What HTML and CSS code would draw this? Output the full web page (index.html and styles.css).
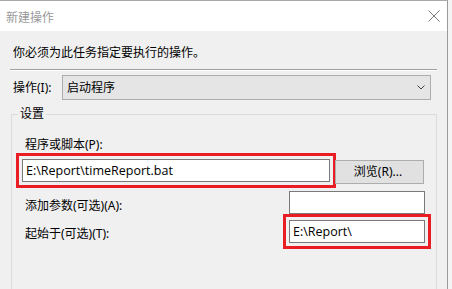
FILE: index.html
```html
<!DOCTYPE html>
<html lang="zh-CN">
<head>
<meta charset="utf-8">
<title>新建操作</title>
<link rel="stylesheet" href="styles.css">
</head>
<body>
<div class="window">
  <div class="titlebar">
    <span class="title">新建操作</span>
    <svg class="close" width="12" height="12" viewBox="0 0 12 12"><path d="M0.5 0.5 L11.5 11.5 M11.5 0.5 L0.5 11.5" stroke="#7a7a7a" stroke-width="1" fill="none"/></svg>
  </div>
  <div class="content">
    <p class="instr">你必须为此任务指定要执行的操作。</p>
    <div class="sep"></div>
    <div class="action-row">
      <span class="label action-label">操作(I):</span>
      <div class="combo">
        <span class="combo-text">启动程序</span>
        <svg class="chev" width="8" height="5" viewBox="0 0 8 5"><path d="M0.5 0.5 L4 4 L7.5 0.5" stroke="#444" stroke-width="1" fill="none"/></svg>
      </div>
    </div>
    <fieldset class="group">
      <legend class="legend">设置</legend>
      <div class="label prog-label">程序或脚本(P):</div>
      <div class="prog-row">
        <div class="textbox prog-box hl">E:\Report\timeReport.bat</div>
        <div class="button">浏览(R)...</div>
      </div>
      <div class="arg-row first">
        <span class="label arg-label">添加参数(可选)(A):</span>
        <div class="textbox small-box"></div>
      </div>
      <div class="arg-row second">
        <span class="label arg-label">起始于(可选)(T):</span>
        <div class="textbox small-box hl">E:\Report\</div>
      </div>
    </fieldset>
  </div>
</div>
</body>
</html>
```
FILE: styles.css
```css
html, body {
  margin: 0;
  padding: 0;
  width: 452px;
  height: 289px;
  overflow: hidden;
  background: #f4f4f4;
}
body {
  font-family: "Noto Sans", "Noto Sans CJK SC", sans-serif;
  font-size: 12px;
  color: #000;
}
.window {
  width: 448px;
  height: 289px;
  border-top: 1px solid #aaaaaa;
  border-right: 1px solid #9a9a9a;
  background: #f0f0f0;
  box-sizing: border-box;
  overflow: hidden;
}
.titlebar {
  height: 30px;
  background: #ffffff;
  display: flex;
  align-items: center;
  justify-content: space-between;
  padding: 0 7px 0 6px;
}
.title {
  font-family: "Noto Sans CJK SC", sans-serif;
  color: #999999;
  font-size: 12px;
  line-height: 16px;
  margin-top: 1px;
}
.close {
  display: block;
}
.content {
  padding: 0 10px 0 10px;
}
.instr {
  margin: 13px 0 0 3px;
  font-family: "Noto Sans CJK SC", sans-serif;
  line-height: 16px;
}
.sep {
  margin-top: 9px;
  height: 0;
  border-top: 1px solid #a0a0a0;
  border-bottom: 1px solid #ffffff;
  width: 427px;
}
.label {
  line-height: 16px;
  white-space: nowrap;
}
.action-row {
  display: flex;
  align-items: flex-start;
  margin-top: 4px;
}
.action-label {
  margin: 5px 0 0 3px;
  width: 49px;
}
.combo {
  width: 369px;
  height: 25px;
  box-sizing: border-box;
  border: 1px solid #adadad;
  background: #e5e5e5;
  display: flex;
  align-items: center;
  justify-content: space-between;
  padding: 0 5px 0 4px;
}
.combo-text {
  line-height: 16px;
  margin-top: 1px;
}
.chev {
  display: block;
}
.group {
  margin: 6px 0 0 1px;
  padding: 15px 0 0 10px;
  border: 1px solid #dcdcdc;
  width: 426px;
  height: 200px;
  box-sizing: border-box;
  min-width: 0;
}
.legend {
  padding: 0 2px;
  margin-left: -4px;
  line-height: 16px;
}
.prog-label {
  margin-left: 3px;
}
.prog-row {
  display: flex;
  align-items: flex-start;
  margin-top: 6px;
}
.textbox {
  box-sizing: border-box;
  height: 23px;
  border: 1px solid #7a7a7a;
  background: #ffffff;
  padding-left: 3px;
  line-height: 21px;
  font-family: "Open Sans", "Noto Sans", sans-serif;
  font-size: 12.5px;
  color: #000;
  white-space: nowrap;
}
.hl {
  outline: 3px solid #ea1c24;
  outline-offset: 3px;
}
.prog-box {
  width: 308px;
}
.button {
  margin: 1px 0 0 5px;
  width: 89px;
  height: 24px;
  box-sizing: border-box;
  border: 1px solid #adadad;
  background: #e1e1e1;
  text-align: center;
  line-height: 22px;
  padding-right: 3px;
}
.arg-row {
  display: flex;
  align-items: flex-start;
  justify-content: space-between;
  width: 403px;
}
.arg-row.first {
  margin-top: 7px;
}
.arg-row.second {
  margin-top: 6px;
}
.arg-label {
  margin-left: 3px;
}
.arg-row.first .arg-label {
  margin-top: 7px;
}
.arg-row.second .arg-label {
  margin-top: 6px;
}
.small-box {
  width: 136px;
}
```
